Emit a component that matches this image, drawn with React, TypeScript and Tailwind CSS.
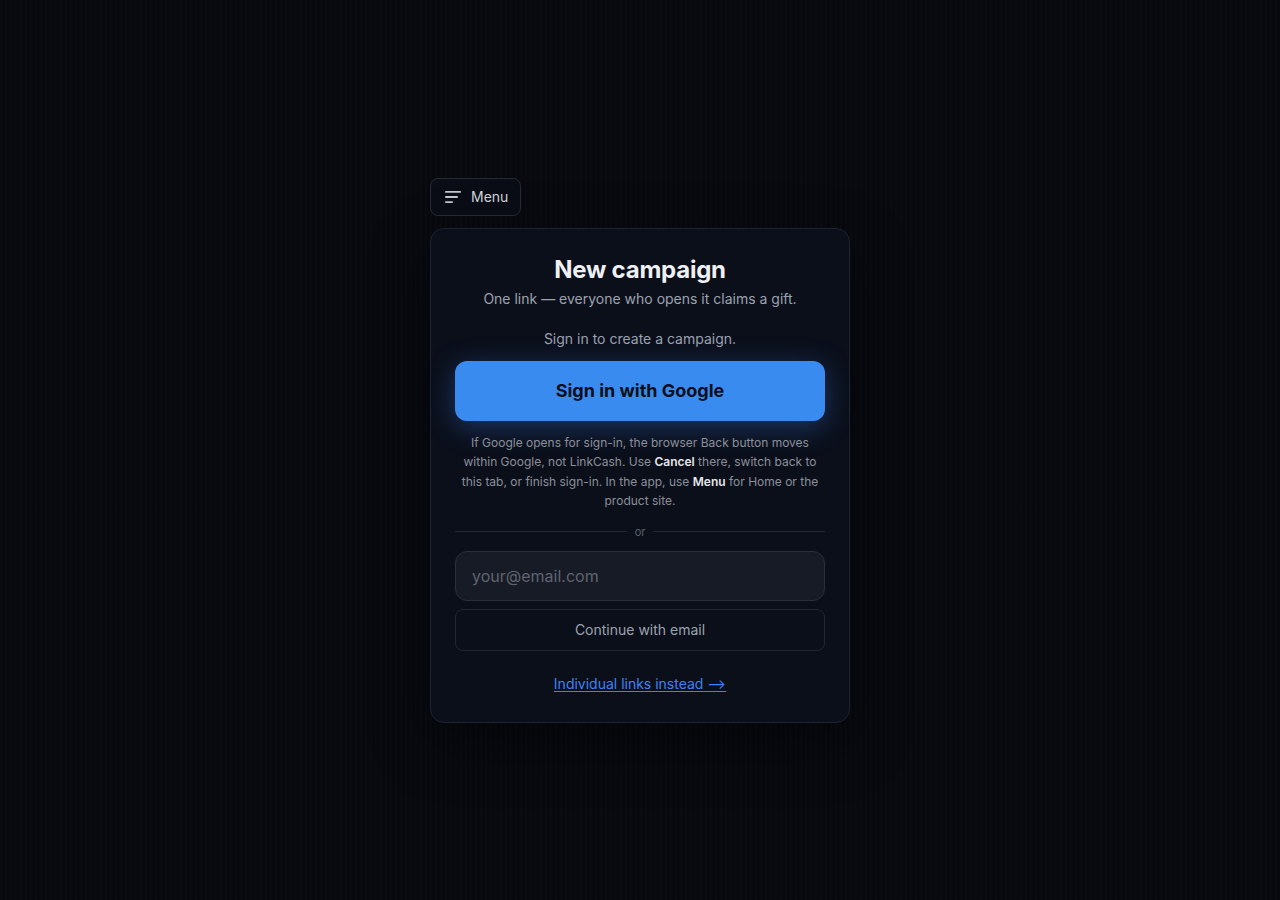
import React from "react";

export default function App() {
  return (
    <div
      className="min-h-[900px] w-full flex items-center justify-center bg-[#07090f] bg-[repeating-linear-gradient(90deg,rgba(255,255,255,0.012)_0px,rgba(255,255,255,0.012)_2px,transparent_2px,transparent_5px)] text-[#e5e7eb]"
      style={{ fontFamily: '"Inter", "Noto Sans", sans-serif' }}
    >
      <div className="w-[420px] flex flex-col gap-3">
        {/* menu button */}
        <div>
          <button className="h-[38px] pl-[14px] pr-[12px] flex items-center gap-[10px] rounded-lg border border-[#262a35] bg-[#0a0d15] text-[14px] text-[#d1d5db]">
            <svg width="16" height="14" viewBox="0 0 16 14" fill="none">
              <rect x="0" y="1" width="16" height="1.8" rx="0.9" fill="#c5c8d0" />
              <rect x="0" y="6.1" width="13" height="1.8" rx="0.9" fill="#c5c8d0" />
              <rect x="0" y="11.2" width="8" height="1.8" rx="0.9" fill="#c5c8d0" />
            </svg>
            Menu
          </button>
        </div>

        {/* card */}
        <div className="rounded-[14px] border border-[#1f2330] bg-[#0b0f1a] px-6 pt-[25px] pb-[28px] flex flex-col items-center shadow-[0_20px_60px_rgba(0,0,0,0.45)]">
          <h1 className="text-[24px] leading-8 font-bold tracking-[-0.01em] text-[#eef0f4]">New campaign</h1>
          <p className="mt-[3px] text-[14px] leading-5 text-[#9ca3af]">One link — everyone who opens it claims a gift.</p>
          <p className="mt-5 text-[14px] leading-5 text-[#9ca3af]">Sign in to create a campaign.</p>

          <button className="mt-3 w-full h-[60px] rounded-xl bg-[#3a8bef] text-[18px] font-bold text-[#0b0f1a] shadow-[0_6px_28px_rgba(59,130,246,0.35)]">
            Sign in with Google
          </button>

          <p className="mt-[12px] text-[12px] leading-[19.5px] text-center text-[#8b909b]">
            If Google opens for sign-in, the browser Back button moves within Google, not LinkCash. Use{" "}
            <span className="font-semibold text-[#e5e7eb]">Cancel</span> there, switch back to this tab, or finish sign-in. In the app, use{" "}
            <span className="font-semibold text-[#e5e7eb]">Menu</span> for Home or the product site.
          </p>

          {/* divider */}
          <div className="mt-[13px] w-full flex items-center gap-2">
            <div className="flex-1 h-px bg-[#222632]" />
            <span className="text-[11px] leading-4 text-[#5b606b]">or</span>
            <div className="flex-1 h-px bg-[#222632]" />
          </div>

          <input
            type="email"
            placeholder="your@email.com"
            className="mt-[11px] w-full h-[50px] rounded-xl border border-[#2a2f3b] bg-[#171b26] px-4 text-[16px] text-[#e5e7eb] placeholder:text-[#5f6470] focus:outline-none"
          />

          <button className="mt-2 w-full h-[42px] rounded-lg border border-[#222632] bg-transparent text-[14px] text-[#9ca3af]">
            Continue with email
          </button>

          <a href="#" className="mt-[23px] text-[14px] leading-5 text-[#3b82f6] underline underline-offset-2">
            Individual links instead ⟶
          </a>
        </div>
      </div>
    </div>
  );
}
